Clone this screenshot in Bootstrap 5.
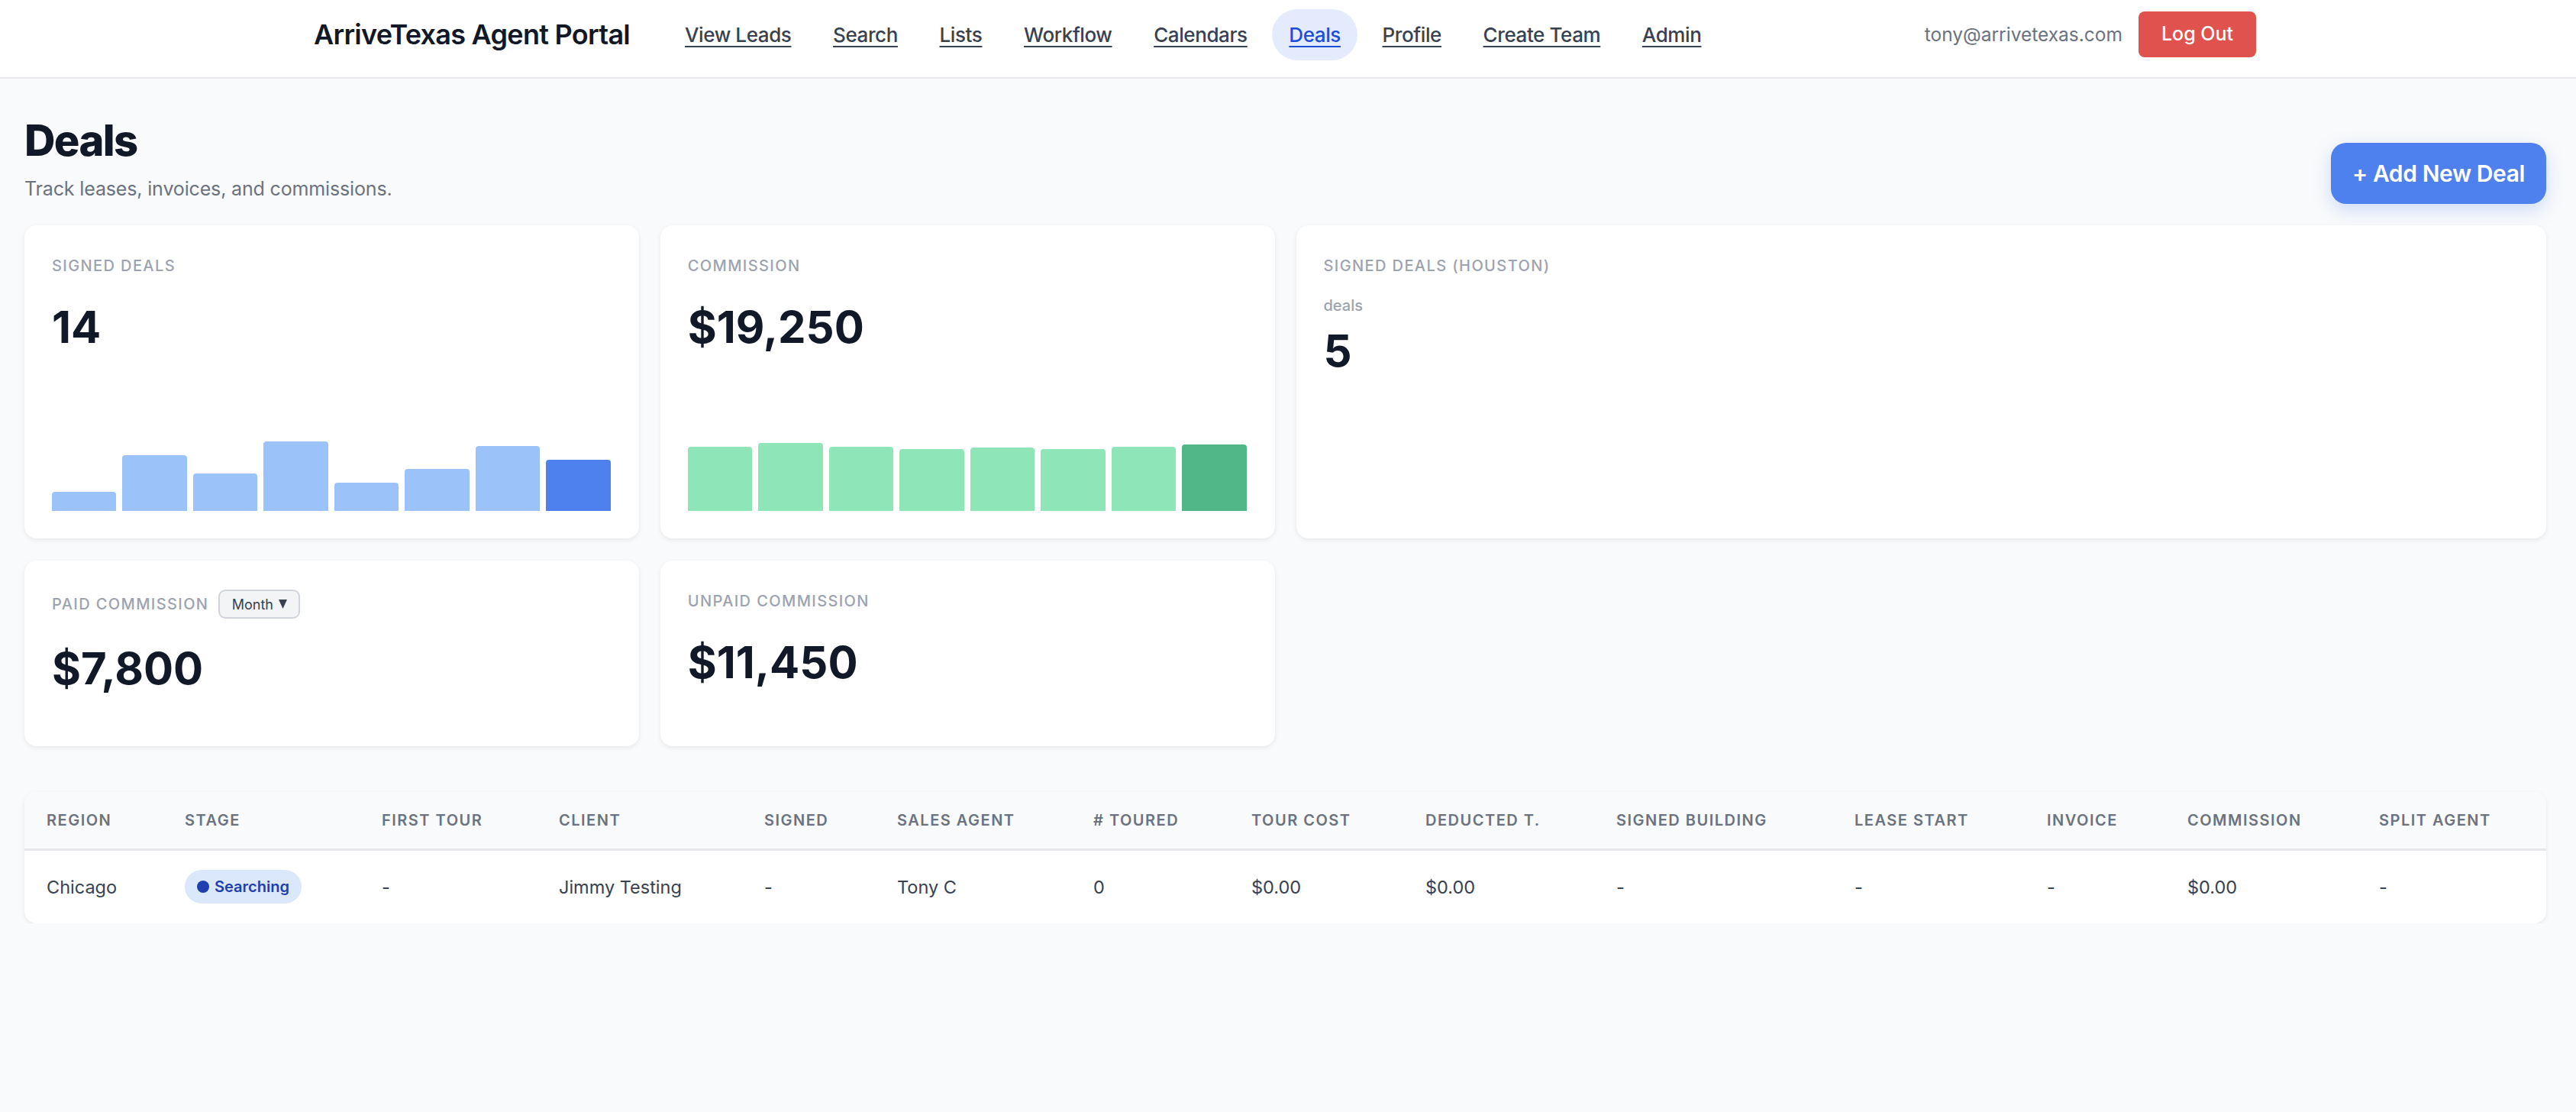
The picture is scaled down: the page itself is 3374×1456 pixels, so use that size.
<!DOCTYPE html>
<html lang="en">

<head>
    <meta charset="UTF-8">
    <title>Deals</title>
    <link href="https://cdn.jsdelivr.net/npm/bootstrap@5.3.3/dist/css/bootstrap.min.css" rel="stylesheet">
    <style>
        body { background: #f9fafb; font-family: Inter, "Liberation Sans", sans-serif; color: #111827; }

        .top-bar { background: #fff; border-bottom: 2px solid #e5e7eb; height: 103px; padding-right: 8px; }
        .top-inner { width: 2544px; height: 90px; }
        .brand-name { font-size: 36px; font-weight: 600; color: #111827; margin-right: 50px; letter-spacing: -0.72px; }
        .top-link { font-size: 26px; letter-spacing: -0.4px; font-weight: 500; color: #374151; padding: 0 22px; height: 67px; line-height: 67px; border-radius: 34px; margin-right: 10.6px; text-decoration: underline; text-decoration-thickness: 2px; text-underline-offset: 5px; }
        .top-link.current { background: #e3ebfc; color: #1d4ed8; }
        .user-mail { font-size: 24.5px; color: #6b7280; margin-right: 21px; }
        .logout-btn { background: #df524e; border: 0; color: #fff; font-size: 25px; font-weight: 500; width: 154px; height: 60px; border-radius: 8px; }

        .page-body { padding: 46px 39px 0 32px; }
        .page-title { font-size: 56px; font-weight: 800; line-height: 1.2; color: #111827; margin: 2px 0 10px; letter-spacing: -1.6px; }
        .page-sub { font-size: 25px; letter-spacing: -0.15px; line-height: 39px; color: #6b7280; margin: 0; }
        .add-btn { background: #4f81ee; border: 0; color: #fff; font-size: 30px; letter-spacing: -0.4px; font-weight: 600; width: 282px; height: 80px; border-radius: 20px; box-shadow: 0 8px 24px rgba(79, 129, 238, .25); }
        .head-row { margin-bottom: 28px; }

        .stat-row { --bs-gutter-x: 28px; --bs-gutter-y: 29px; }
        .stat-box { background: #fff; border-radius: 16px; box-shadow: 0 2px 6px rgba(0, 0, 0, .08); padding: 38px 37px 36px 36px; height: 243px; }
        .stat-tall { height: 410px; }
        .stat-label { font-size: 20px; letter-spacing: 1.4px; color: #9ca3af; text-transform: uppercase; font-weight: 500; }
        .stat-note { font-size: 20px; color: #9ca3af; font-weight: 500; margin-top: 22px; }
        .stat-num { font-size: 58px; font-weight: 700; line-height: 1.2; color: #111827; margin-top: 31px; }
        .stat-note + .stat-num { margin-top: 10px; }
        .mini-bars { height: 96px; gap: 8px; }
        .mini-bars div { flex: 1; border-radius: 4px 4px 0 0; }
        .blue-bars div { background: #9cc3f9; }
        .blue-bars div:last-child { background: #4f81ee; }
        .green-bars div { background: #8de5b8; }
        .green-bars div:last-child { background: #52b788; }
        .month-pick { font-size: 18px; color: #374151; background: #f3f4f6; border: 2px solid #d1d5db; border-radius: 9px; height: 38px; width: 107px; gap: 7px; margin-left: 13px; }
        .month-pick svg { width: 11px; height: 12px; fill: #374151; }

        .deals-wrap { background: #fff; border-radius: 16px; box-shadow: 0 2px 6px rgba(0, 0, 0, .08); overflow: hidden; margin-top: 60px; }
        .deals-table { margin: 0; width: 100%; table-layout: fixed; }
        .deals-table th { background: #f9fafb; color: #6b7280; font-size: 20px; font-weight: 600; letter-spacing: 1.5px; text-transform: uppercase; padding: 0 0 0 29px; height: 75px; border-bottom: 3px solid #e5e7eb; white-space: nowrap; vertical-align: middle; }
        .deals-table td { color: #374151; font-size: 23.5px; padding: 0 0 0 29px; height: 97px; border: 0; white-space: nowrap; vertical-align: middle; }
        .deals-table th:nth-child(1) { width: 181px; }
        .deals-table th:nth-child(2) { width: 258px; }
        .deals-table th:nth-child(3) { width: 232px; }
        .deals-table th:nth-child(4) { width: 269px; }
        .deals-table th:nth-child(5) { width: 174px; }
        .deals-table th:nth-child(6) { width: 257px; }
        .deals-table th:nth-child(7) { width: 207px; }
        .deals-table th:nth-child(8) { width: 228px; }
        .deals-table th:nth-child(9) { width: 250px; }
        .deals-table th:nth-child(10) { width: 312px; }
        .deals-table th:nth-child(11) { width: 252px; }
        .deals-table th:nth-child(12) { width: 184px; }
        .deals-table th:nth-child(13) { width: 251px; }
        .stage-tag { background: #dbe7fb; color: #1e40af; font-size: 20px; font-weight: 600; height: 44px; padding: 0 16px; border-radius: 22px; gap: 7px; }
        .stage-dot { width: 16px; height: 16px; border-radius: 50%; background: #1e40af; }
    </style>
</head>

<body>

    <nav class="top-bar d-flex justify-content-center">
        <div class="top-inner d-flex align-items-center">
            <span class="brand-name">ArriveTexas Agent Portal</span>
            <a class="top-link" href="#">View Leads</a>
            <a class="top-link" href="#">Search</a>
            <a class="top-link" href="#">Lists</a>
            <a class="top-link" href="#">Workflow</a>
            <a class="top-link" href="#">Calendars</a>
            <a class="top-link current" href="#">Deals</a>
            <a class="top-link" href="#">Profile</a>
            <a class="top-link" href="#">Create Team</a>
            <a class="top-link" href="#">Admin</a>
            <span class="user-mail ms-auto">tony@arrivetexas.com</span>
            <button class="logout-btn">Log Out</button>
        </div>
    </nav>

    <div class="page-body">
        <div class="head-row d-flex justify-content-between align-items-end">
            <div>
                <h1 class="page-title">Deals</h1>
                <p class="page-sub">Track leases, invoices, and commissions.</p>
            </div>
            <button class="add-btn">+ Add New Deal</button>
        </div>

        <div class="row stat-row">
            <div class="col-3">
                <div class="stat-box stat-tall d-flex flex-column">
                    <div class="stat-label">Signed Deals</div>
                    <div class="stat-num">14</div>
                    <div class="mini-bars blue-bars d-flex align-items-end mt-auto">
                        <div style="height:25px"></div>
                        <div style="height:73px"></div>
                        <div style="height:49px"></div>
                        <div style="height:91px"></div>
                        <div style="height:37px"></div>
                        <div style="height:55px"></div>
                        <div style="height:85px"></div>
                        <div style="height:67px"></div>
                    </div>
                </div>
            </div>
            <div class="col-3">
                <div class="stat-box stat-tall d-flex flex-column">
                    <div class="stat-label">Commission</div>
                    <div class="stat-num">$19,250</div>
                    <div class="mini-bars green-bars d-flex align-items-end mt-auto">
                        <div style="height:84px"></div>
                        <div style="height:89px"></div>
                        <div style="height:84px"></div>
                        <div style="height:81px"></div>
                        <div style="height:83px"></div>
                        <div style="height:81px"></div>
                        <div style="height:84px"></div>
                        <div style="height:87px"></div>
                    </div>
                </div>
            </div>
            <div class="col-6">
                <div class="stat-box stat-tall">
                    <div class="stat-label">Signed Deals (Houston)</div>
                    <div class="stat-note">deals</div>
                    <div class="stat-num">5</div>
                </div>
            </div>
            <div class="col-3">
                <div class="stat-box">
                    <div class="d-flex align-items-center">
                        <span class="stat-label">Paid Commission</span>
                        <span class="month-pick d-flex align-items-center justify-content-center">Month<svg viewBox="0 0 11 12"><polygon points="0,0 11,0 5.5,12"/></svg></span>
                    </div>
                    <div class="stat-num">$7,800</div>
                </div>
            </div>
            <div class="col-3">
                <div class="stat-box">
                    <div class="stat-label">Unpaid Commission</div>
                    <div class="stat-num">$11,450</div>
                </div>
            </div>
        </div>

        <div class="deals-wrap">
            <table class="table deals-table">
                <thead>
                    <tr>
                        <th>Region</th>
                        <th>Stage</th>
                        <th>First Tour</th>
                        <th>Client</th>
                        <th>Signed</th>
                        <th>Sales Agent</th>
                        <th># Toured</th>
                        <th>Tour Cost</th>
                        <th>Deducted T.</th>
                        <th>Signed Building</th>
                        <th>Lease Start</th>
                        <th>Invoice</th>
                        <th>Commission</th>
                        <th>Split Agent</th>
                    </tr>
                </thead>
                <tbody>
                    <tr>
                        <td>Chicago</td>
                        <td><span class="stage-tag d-inline-flex align-items-center"><span class="stage-dot"></span>Searching</span></td>
                        <td>-</td>
                        <td>Jimmy Testing</td>
                        <td>-</td>
                        <td>Tony C</td>
                        <td>0</td>
                        <td>$0.00</td>
                        <td>$0.00</td>
                        <td>-</td>
                        <td>-</td>
                        <td>-</td>
                        <td>$0.00</td>
                        <td>-</td>
                    </tr>
                </tbody>
            </table>
        </div>
    </div>

    <script src="https://cdn.jsdelivr.net/npm/bootstrap@5.3.3/dist/js/bootstrap.bundle.min.js"></script>
</body>

</html>
